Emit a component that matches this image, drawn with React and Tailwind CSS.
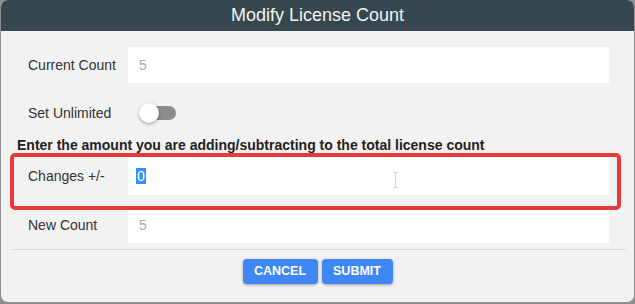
import React from "react";

const font = { fontFamily: '"Liberation Sans", Arial, sans-serif' };

function Row({ label, children, className = "" }) {
  return (
    <div className={`flex items-stretch pl-[27px] pr-[25px] ${className}`}>
      <div className="w-[100px] flex items-center text-[14px] text-[#333]">{label}</div>
      {children}
    </div>
  );
}

export default function App() {
  return (
    <div className="w-[635px] h-[304px] bg-[#8f8f8f] relative overflow-hidden" style={font}>
      <div className="ml-px w-[633px] h-[302px] bg-[#f2f2f2] rounded-[7px] overflow-hidden flex flex-col">
        <div className="h-[31px] bg-[#37474f] flex items-center justify-center text-[18px] text-[#f2f2f2] shrink-0">
          Modify License Count
        </div>
        <div className="flex flex-col">
          <Row label="Current Count" className="mt-4">
            <div className="flex-1 h-[36px] bg-white flex items-center pl-[11px] text-[14px] text-[#aaa]">5</div>
          </Row>
          <Row label="Set Unlimited" className="mt-4 h-[28px]">
            <div className="flex items-center">
              <div className="relative w-[50px] h-[20px]">
                <div className="absolute left-[20px] top-[3px] w-[28px] h-[14px] rounded-full bg-[#8c8c8c]"></div>
                <div className="absolute left-[11px] top-0 w-[20px] h-[20px] rounded-full bg-white shadow-[0_1px_3px_rgba(0,0,0,0.4)]"></div>
              </div>
            </div>
          </Row>
          <div className="mt-[10px] pl-[16px] h-[16px] leading-[16px] text-[14px] font-bold text-[#222] whitespace-nowrap">
            Enter the amount you are adding/subtracting to the total license count
          </div>
          <Row label="Changes +/-" className="mt-1">
            <div className="flex-1 h-[38px] bg-white flex items-center pl-[8px] text-[14px]">
              <span className="bg-[#3390ff] text-white px-px leading-[16px]">0</span>
            </div>
          </Row>
          <Row label="New Count" className="mt-3">
            <div className="flex-1 h-[36px] bg-white flex items-center pl-[11px] text-[14px] text-[#aaa]">5</div>
          </Row>
          <div className="mt-[6px] ml-[10px] mr-[8px] h-px bg-[#dcdcdc]"></div>
          <div className="mt-[9px] flex justify-center gap-1">
            <button className="h-[25px] w-[75px] rounded-[4px] bg-[#3f86f6] text-white text-[12.5px] font-bold shadow-[0_1px_3px_rgba(0,0,0,0.35)]">
              CANCEL
            </button>
            <button className="h-[25px] w-[71px] rounded-[4px] bg-[#3f86f6] text-white text-[12.5px] font-bold shadow-[0_1px_3px_rgba(0,0,0,0.35)]">
              SUBMIT
            </button>
          </div>
        </div>
      </div>
      {/* annotation box */}
      <div className="absolute left-[10px] top-[153px] w-[611px] h-[57px] border-[4px] border-[#e8393c] rounded-[5px]"></div>
      {/* I-beam cursor */}
      <svg className="absolute left-[392px] top-[172px]" width="7" height="16" viewBox="0 0 7 16">
        <path d="M1 0.5h5M1 15.5h5M3.5 0.5v15" stroke="#d6d6d6" strokeWidth="1" fill="none" />
      </svg>
    </div>
  );
}
